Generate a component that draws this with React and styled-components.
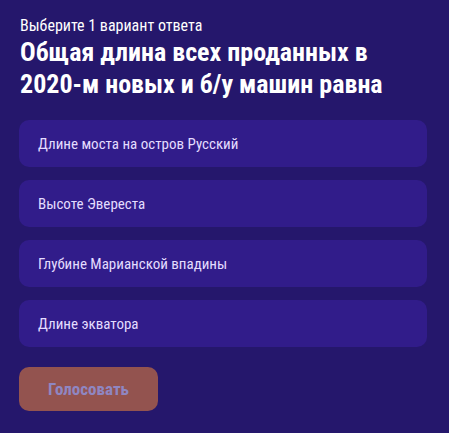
import React, { useState } from "react";
import styled, { createGlobalStyle } from "styled-components";

const GlobalStyle = createGlobalStyle`
  html, body {
    margin: 0;
    padding: 0;
    background: #25176c;
  }
  body {
    font-family: "Roboto Condensed", "Roboto", sans-serif;
    font-stretch: condensed;
  }
`;

const options = [
  "Длине моста на остров Русский",
  "Высоте Эвереста",
  "Глубине Марианской впадины",
  "Длине экватора",
];

const App = () => {
  const [picked, setPicked] = useState(null);

  return (
    <>
      <GlobalStyle />
      <Wrapper>
        <Hint>Выберите 1 вариант ответа</Hint>
        <Question>Общая длина всех проданных в 2020-м новых и б/у машин равна</Question>
        <List>
          {options.map((opt, i) => (
            <Option key={opt} active={picked === i} onClick={() => setPicked(i)}>
              {opt}
            </Option>
          ))}
        </List>
        <VoteButton disabled={picked === null}>Голосовать</VoteButton>
      </Wrapper>
    </>
  );
};

const Wrapper = styled.div`
  display: flex;
  flex-direction: column;
  align-items: flex-start;
  width: 449px;
  height: 433px;
  box-sizing: border-box;
  padding: 16px 22px 0 19px;
  background: #25176c;
`;

const Hint = styled.div`
  color: #ffffff;
  font-size: 16px;
  line-height: 20px;
  margin-left: 1px;
`;

const Question = styled.h2`
  margin: 0 0 0 1px;
  color: #ffffff;
  font-size: 26px;
  font-weight: 700;
  line-height: 32px;
  max-width: 390px;
`;

const List = styled.div`
  display: flex;
  flex-direction: column;
  gap: 13px;
  width: 100%;
  margin-top: 20px;
`;

const Option = styled.div`
  display: flex;
  align-items: center;
  height: 47px;
  padding: 0 19px;
  border-radius: 10px;
  background: ${(p) => (p.active ? "#4a2fb8" : "#311c8a")};
  color: #e4dcff;
  font-size: 15px;
  cursor: pointer;
`;

const VoteButton = styled.button`
  margin-top: 20px;
  width: 139px;
  height: 44px;
  border: none;
  border-radius: 10px;
  background: #93534f;
  color: #8f86c2;
  font-family: inherit;
  font-size: 17px;
  font-weight: 700;

  &:focus {
    outline: none;
  }
`;

export default App;
